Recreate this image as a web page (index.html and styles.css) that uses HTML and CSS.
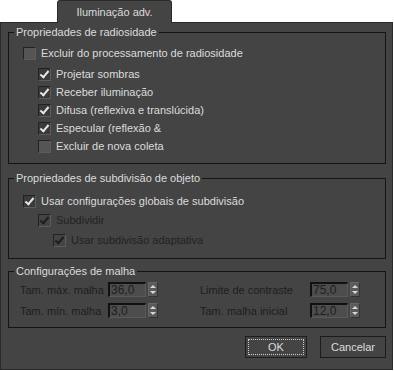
FILE: index.html
```html
<!doctype html>
<html lang="pt">
  <head>
    <meta charset="UTF-8" />
    <title>Iluminação adv.</title>
    <link rel="stylesheet" href="styles.css">
  </head>
  <body>
    <div class="tabs">
      <div class="tab">Iluminação adv.</div>
    </div>

    <div class="dialog">
      <!-- Radiosidade -->
      <div class="group group-radio">
        <div class="group-title">Propriedades de radiosidade</div>
        <label class="check row-first">
          <span class="box"></span>Excluir do processamento de radiosidade
        </label>
        <div class="sub">
          <label class="check"><span class="box on"></span>Projetar sombras</label>
          <label class="check"><span class="box on"></span>Receber iluminação</label>
          <label class="check"><span class="box on"></span>Difusa (reflexiva e translúcida)</label>
          <label class="check"><span class="box on"></span>Especular (reflexão &amp;</label>
          <label class="check"><span class="box"></span>Excluir de nova coleta</label>
        </div>
      </div>

      <!-- Subdivisao -->
      <div class="group group-subdiv">
        <div class="group-title">Propriedades de subdivisão de objeto</div>
        <label class="check row-first-sub"><span class="box on"></span>Usar configurações globais de subdivisão</label>
        <label class="check disabled indent-1"><span class="box on"></span>Subdividir</label>
        <label class="check disabled indent-2"><span class="box on"></span>Usar subdivisão adaptativa</label>
      </div>

      <!-- Malha -->
      <div class="group group-mesh">
        <div class="group-title">Configurações de malha</div>
        <div class="mesh-grid">
          <div class="field">
            <span class="field-label">Tam. máx. malha</span>
            <span class="spin"><span class="input">36,0</span><span class="arrows"><i class="up"></i><i class="down"></i></span></span>
          </div>
          <div class="field">
            <span class="field-label">Limite de contraste</span>
            <span class="spin"><span class="input">75,0</span><span class="arrows"><i class="up"></i><i class="down"></i></span></span>
          </div>
          <div class="field">
            <span class="field-label">Tam. mín. malha</span>
            <span class="spin"><span class="input">3,0</span><span class="arrows"><i class="up"></i><i class="down"></i></span></span>
          </div>
          <div class="field">
            <span class="field-label">Tam. malha inicial</span>
            <span class="spin"><span class="input">12,0</span><span class="arrows"><i class="up"></i><i class="down"></i></span></span>
          </div>
        </div>
      </div>

      <div class="buttons">
        <button class="btn btn-default"><span>OK</span></button>
        <button class="btn">Cancelar</button>
      </div>
    </div>
  </body>
</html>
```

FILE: styles.css
```css
* {
  box-sizing: border-box;
}

body {
  margin: 0;
  width: 394px;
  height: 371px;
  background: #ffffff;
  font-family: "Liberation Sans", Arial, sans-serif;
  font-size: 11px;
  color: #dcdcdc;
  overflow: hidden;
}

.tabs {
  height: 22px;
  padding-left: 57px;
  display: flex;
  align-items: flex-end;
}

.tab {
  width: 115px;
  height: 23px;
  margin-bottom: -1px;
  background: #444444;
  border: 1px solid #2a2a2a;
  border-bottom: none;
  border-radius: 3px 3px 0 0;
  text-align: center;
  line-height: 22px;
  position: relative;
  z-index: 1;
}

.dialog {
  width: 393px;
  height: 348px;
  background: #444444;
  border: 1px solid #2a2a2a;
  padding: 9px 6px 0 7px;
}

/* group box */
.group {
  border: 1px solid #151515;
  padding-left: 14px;
}

.group-title {
  display: table;
  margin: -7px 0 0 -9px;
  padding: 0 2px;
  height: 13px;
  line-height: 13px;
  background: #444444;
}

.group-radio {
  height: 132px;
}

.group-subdiv {
  margin-top: 14px;
  height: 81px;
}

.group-mesh {
  margin-top: 12px;
  height: 57px;
}

.check {
  display: flex;
  align-items: center;
  height: 18px;
  white-space: nowrap;
}

.row-first {
  margin-top: 5px;
  margin-bottom: 3px;
}

.row-first-sub {
  margin-top: 7px;
}

.sub {
  padding-left: 15px;
}

.indent-1 {
  padding-left: 15px;
  height: 20px;
}

.indent-2 {
  padding-left: 30px;
  height: 20px;
}

.box {
  width: 13px;
  height: 13px;
  margin-right: 5px;
  background: #555555;
  border: 1px solid #222222;
  border-right-color: #5c5c5c;
  border-bottom-color: #5c5c5c;
  flex: none;
  position: relative;
}

.box.on {
  background: #3a3a3a;
}

.box.on::after {
  content: "";
  position: absolute;
  left: 3px;
  top: 0px;
  width: 3px;
  height: 7px;
  border: solid #e6e6e6;
  border-width: 0 2px 2px 0;
  transform: rotate(40deg);
}

.disabled {
  color: #222222;
}

.disabled .box {
  background: #444444;
}

.disabled .box.on::after {
  border-color: #1e1e1e;
}

/* mesh fields */
.mesh-grid {
  display: grid;
  grid-template-columns: 180px 180px;
  row-gap: 6px;
  margin-top: 4px;
  margin-left: -3px;
}

.field {
  display: flex;
  align-items: center;
  height: 15px;
}

.field-label {
  color: #1e1e1e;
  width: 88px;
}

.field:nth-child(2n) .field-label {
  width: 110px;
}

.spin {
  display: flex;
  align-items: stretch;
  height: 15px;
}

.input {
  width: 38px;
  height: 15px;
  background: #4d4d4d;
  border: 1px solid #5a5a5a;
  border-top: 2px solid #111111;
  border-left: 2px solid #111111;
  color: #1e1e1e;
  line-height: 12px;
  padding-left: 1px;
  font-size: 12px;
}

.arrows {
  width: 10px;
  margin-left: 2px;
  background: #5a5a5a;
  display: flex;
  flex-direction: column;
  justify-content: space-around;
  align-items: center;
  border: 1px solid #333333;
  border-top-color: #666666;
  border-left-color: #666666;
}

.arrows i {
  width: 0;
  height: 0;
  border-left: 3px solid transparent;
  border-right: 3px solid transparent;
}

.arrows .up {
  border-bottom: 3px solid #d8d8d8;
}

.arrows .down {
  border-top: 3px solid #d8d8d8;
}

.buttons {
  display: flex;
  justify-content: flex-end;
  gap: 13px;
  margin-top: 8px;
}

.btn {
  font: inherit;
  color: #dcdcdc;
  background: #444444;
  border: 1px solid #1c1c1c;
  height: 22px;
  padding: 0;
  width: 62px;
}

.btn + .btn {
  width: 66px;
}

.btn-default {
  padding: 2px;
}

.btn-default span {
  display: block;
  height: 100%;
  border: 1px dotted #cccccc;
  line-height: 15px;
}
```
